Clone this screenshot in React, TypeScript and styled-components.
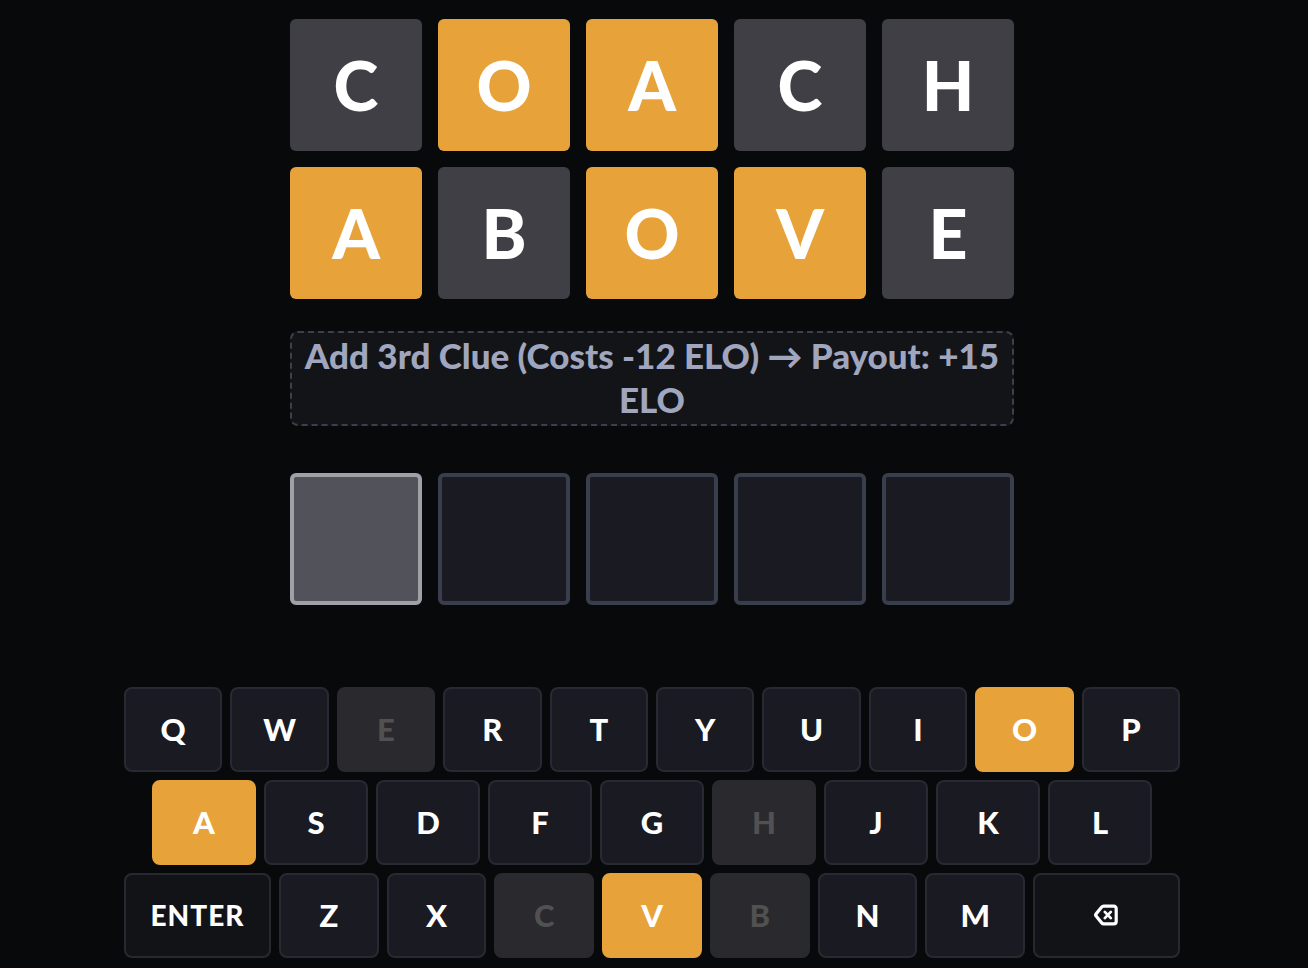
import React from "react";
import styled, { createGlobalStyle, css } from "styled-components";

type Mark = "present" | "absent";
type KeyTone = Mark | "idle" | "action";

const GlobalStyle = createGlobalStyle`
  *, *::before, *::after { box-sizing: border-box; }
  body {
    margin: 0;
    background: #07090a;
    color: #ffffff;
    font-family: Lato, "Liberation Sans", sans-serif;
  }
`;

const Page = styled.main`
  display: flex;
  flex-direction: column;
  align-items: center;
  min-height: 100vh;
  padding: 19px 12px 10px 8px;
  background: #07090a;
`;

const Board = styled.section`
  display: flex;
  flex-direction: column;
  gap: 16px;
  width: 100%;
  max-width: 724px;
`;

const TileRow = styled.div`
  display: grid;
  grid-template-columns: repeat(5, 1fr);
  gap: 16px;
`;

const Tile = styled.div<{ $mark: Mark }>`
  display: flex;
  align-items: center;
  justify-content: center;
  aspect-ratio: 1;
  border-radius: 6px;
  background: ${({ $mark }) => ($mark === "present" ? "#e7a33a" : "#403f45")};
  font-size: 68px;
  line-height: 80px;
  font-weight: 900;
`;

const ClueButton = styled.button`
  width: 100%;
  min-height: 95px;
  margin: 16px 0 31px;
  padding: 0 8px 3px;
  border: 2px dashed #3d3f4a;
  border-radius: 8px;
  background: #121418;
  color: #a0a6be;
  font-family: Lato, Inter, sans-serif;
  font-size: 35px;
  line-height: 44px;
  font-weight: 900;
  cursor: pointer;
`;

const Slot = styled.div<{ $active: boolean }>`
  aspect-ratio: 1;
  border: 4px solid ${({ $active }) => ($active ? "#a1a0a8" : "#383e4c")};
  border-radius: 6px;
  background: ${({ $active }) => ($active ? "#52525b" : "#1a1a22")};
`;

const Keyboard = styled.section`
  display: flex;
  flex-direction: column;
  gap: 8px;
  width: 100%;
  max-width: 1056px;
  margin-top: 82px;
`;

const KeyRow = styled.div<{ $inset?: boolean }>`
  display: flex;
  gap: 8px;
  padding: 0 ${({ $inset }) => ($inset ? "28px" : "0")};
`;

const tones = {
  idle: css`
    border-color: #282933;
    background: #1a1a22;
  `,
  action: css`
    border-color: #282930;
    background: #121317;
    letter-spacing: 1px;
  `,
  present: css`
    border-color: #e7a33a;
    background: #e7a33a;
  `,
  absent: css`
    border-color: #2a292e;
    background: #2a292e;
    color: #515152;
  `,
};

const Key = styled.button<{ $tone: KeyTone }>`
  display: flex;
  align-items: center;
  justify-content: center;
  flex: ${({ $tone }) => ($tone === "action" ? "0 1 147px" : "1 1 0")};
  min-width: 0;
  height: 85px;
  padding: 0 0 1px;
  border: 2px solid;
  border-radius: 8px;
  color: #ffffff;
  font-family: inherit;
  font-size: ${({ $tone }) => ($tone === "action" ? "28px" : "31px")};
  line-height: 40px;
  font-weight: 900;
  cursor: pointer;
  ${({ $tone }) => tones[$tone]}
`;

const guesses = ["COACH", "ABOVE"];
const present = "OAV";
const absent = "CHBE";

const markOf = (letter: string): Mark =>
  present.includes(letter) ? "present" : "absent";

const toneOf = (letter: string): KeyTone =>
  present.includes(letter)
    ? "present"
    : absent.includes(letter)
      ? "absent"
      : "idle";

const BackspaceIcon = () => (
  <svg width="25" height="22" viewBox="0 0 25 22" fill="none" aria-hidden="true">
    <path
      d="M9.8 2.1H19.8A2.4 2.4 0 0 1 22.2 4.5V17.5A2.4 2.4 0 0 1 19.8 19.9H9.8A2.8 2.8 0 0 1 7.7 18.9L2.1 12.1A1.7 1.7 0 0 1 2.1 9.9L7.7 3.1A2.8 2.8 0 0 1 9.8 2.1Z"
      stroke="currentColor"
      strokeWidth="3.2"
      strokeLinejoin="round"
    />
    <path
      d="M10.8 7.9L16.8 14.1M16.8 7.9L10.8 14.1"
      stroke="currentColor"
      strokeWidth="2.8"
      strokeLinecap="round"
    />
  </svg>
);

const LetterKeys = ({ letters }: { letters: string }) => (
  <>
    {[...letters].map((letter) => (
      <Key key={letter} type="button" $tone={toneOf(letter)}>
        {letter}
      </Key>
    ))}
  </>
);

export default function App() {
  return (
    <>
      <GlobalStyle />
      <Page>
        <Board aria-label="Board">
          {guesses.map((word) => (
            <TileRow key={word}>
              {[...word].map((letter, i) => (
                <Tile key={i} $mark={markOf(letter)}>
                  {letter}
                </Tile>
              ))}
            </TileRow>
          ))}
          <ClueButton type="button">
            Add 3rd Clue (Costs -12 ELO) → Payout: +15 ELO
          </ClueButton>
          <TileRow>
            {[0, 1, 2, 3, 4].map((i) => (
              <Slot key={i} $active={i === 0} />
            ))}
          </TileRow>
        </Board>
        <Keyboard aria-label="Keyboard">
          <KeyRow>
            <LetterKeys letters="QWERTYUIOP" />
          </KeyRow>
          <KeyRow $inset>
            <LetterKeys letters="ASDFGHJKL" />
          </KeyRow>
          <KeyRow>
            <Key type="button" $tone="action">
              ENTER
            </Key>
            <LetterKeys letters="ZXCVBNM" />
            <Key type="button" $tone="action" aria-label="Backspace">
              <BackspaceIcon />
            </Key>
          </KeyRow>
        </Keyboard>
      </Page>
    </>
  );
}
